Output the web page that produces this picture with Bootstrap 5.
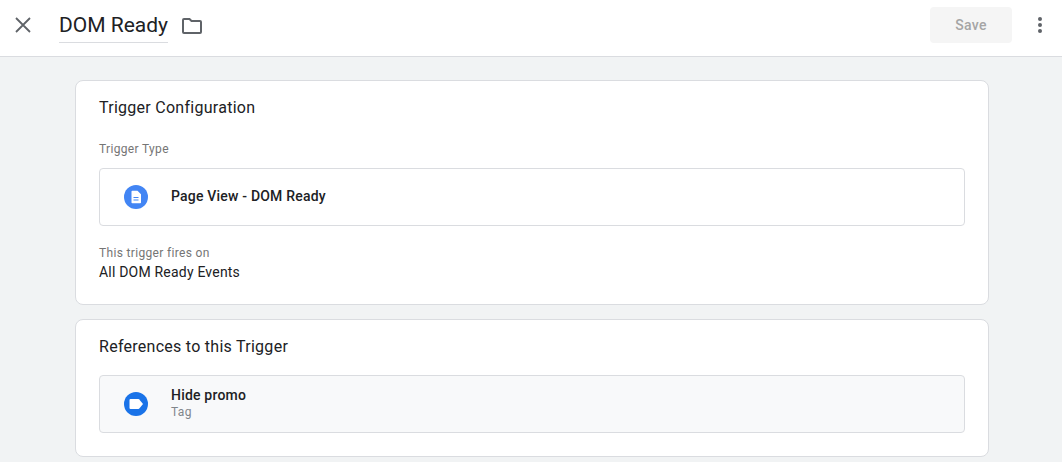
<!DOCTYPE html>
<html lang="en">
<head>
  <meta charset="UTF-8" />
  <title>DOM Ready</title>
  <link rel="stylesheet" href="https://cdn.jsdelivr.net/npm/bootstrap@5.3.0/dist/css/bootstrap.min.css">
  <style>
    body {
      font-family: Roboto, "Liberation Sans", sans-serif;
      background-color: #f1f3f4;
      color: #202124;
      height: 462px;
      overflow: hidden;
    }
    .top-bar {
      height: 57px;
      background: #fff;
      border-bottom: 1px solid #dadce0;
      padding: 0 19px 6px 14px;
    }
    .icon-slot {
      width: 18px;
      height: 18px;
    }
    .trigger-name {
      font-size: 21px;
      line-height: 39px;
      height: 37px;
      margin-left: 27px;
      margin-top: -1px;
      border-bottom: 1px solid #dadce0;
    }
    .folder-icon {
      margin-left: 14px;
      margin-top: 2px;
    }
    .save-btn {
      width: 82px;
      height: 36px;
      background: #f5f5f5;
      color: #a5a5a5;
      border: 0;
      border-radius: 4px;
      font-size: 14px;
      font-weight: 500;
      letter-spacing: .25px;
      margin-right: 25px;
    }
    .kebab {
      margin-top: -1px;
    }
    .page-body {
      width: 914px;
      margin-left: 75px;
      padding-top: 23px;
    }
    .panel {
      background: #fff;
      border: 1px solid #dadce0;
      border-radius: 8px;
      padding: 0 23px;
    }
    .panel-config {
      height: 225px;
      margin-bottom: 14px;
    }
    .panel-refs {
      height: 138px;
    }
    .panel-title {
      font-size: 16px;
      font-weight: 400;
      line-height: 24px;
      letter-spacing: .27px;
      margin: 0;
      padding-top: 15px;
      height: 38px;
    }
    .panel-title-refs {
      margin-bottom: 17px;
    }
    .field-label {
      font-size: 12px;
      line-height: 16px;
      letter-spacing: .33px;
      color: #757575;
    }
    .label-type {
      margin-top: 22px;
      margin-bottom: 11px;
    }
    .label-fires {
      margin-top: 19px;
    }
    .type-row {
      height: 58px;
      border: 1px solid #dadce0;
      border-radius: 4px;
    }
    .type-row-muted {
      background: #f8f9fa;
    }
    .type-icon {
      width: 24px;
      height: 24px;
      margin-left: 24px;
      margin-right: 23px;
    }
    .type-name {
      font-size: 14px;
      font-weight: 500;
      line-height: 18px;
      letter-spacing: .2px;
    }
    .type-name-single {
      margin-top: -2px;
    }
    .type-sub {
      font-size: 12px;
      line-height: 16px;
      letter-spacing: .3px;
      color: #80868b;
    }
    .type-text {
      margin-top: -2px;
    }
    .fires-value {
      font-size: 14px;
      line-height: 20px;
      letter-spacing: .2px;
      margin-top: 1px;
    }
  </style>
</head>
<body>
  <header class="top-bar d-flex align-items-center">
    <svg class="icon-slot" viewBox="0 0 18 18"><path d="M2 2L16 16M16 2L2 16" stroke="#5f6368" stroke-width="1.8" fill="none"/></svg>
    <div class="trigger-name">DOM Ready</div>
    <svg class="folder-icon" width="20" height="18" viewBox="0 0 20 18"><path d="M2 2h5.500l2 2H18a1 1 0 0 1 1 1v10a1 1 0 0 1-1 1H2a1 1 0 0 1-1-1V3a1 1 0 0 1 1-1z" stroke="#5f6368" stroke-width="2" fill="none"/></svg>
    <button class="save-btn ms-auto" type="button" disabled>Save</button>
    <svg class="kebab" width="6" height="18" viewBox="0 0 6 18"><circle cx="3" cy="3" r="2" fill="#5f6368"/><circle cx="3" cy="9" r="2" fill="#5f6368"/><circle cx="3" cy="15" r="2" fill="#5f6368"/></svg>
  </header>

  <main class="page-body">
    <section class="panel panel-config">
      <h2 class="panel-title">Trigger Configuration</h2>
      <div class="field-label label-type">Trigger Type</div>
      <div class="type-row d-flex align-items-center">
        <svg class="type-icon" viewBox="0 0 24 24"><circle cx="12" cy="12" r="12" fill="#4285f4"/><path d="M7.500 6.500a.8.8 0 0 1 .8-.8h5.200l3.500 3.500v8.300a.8.8 0 0 1-.8.8H8.300a.8.8 0 0 1-.8-.8z" fill="#fff"/><path d="M9.500 12.500h5M9.500 15h5" stroke="#4285f4" stroke-width="1.100"/></svg>
        <div class="type-name type-name-single">Page View - DOM Ready</div>
      </div>
      <div class="field-label label-fires">This trigger fires on</div>
      <div class="fires-value">All DOM Ready Events</div>
    </section>
    <section class="panel panel-refs">
      <h2 class="panel-title panel-title-refs">References to this Trigger</h2>
      <div class="type-row type-row-muted d-flex align-items-center">
        <svg class="type-icon" viewBox="0 0 24 24"><circle cx="12" cy="12" r="12" fill="#1a73e8"/><path d="M6.500 7h8l.8.400 3.700 4.600-3.700 4.600-.8.400h-8a1 1 0 0 1-1-1V8a1 1 0 0 1 1-1z" fill="#fff"/></svg>
        <div class="type-text">
          <div class="type-name">Hide promo</div>
          <div class="type-sub">Tag</div>
        </div>
      </div>
    </section>
  </main>
  <script src="https://cdn.jsdelivr.net/npm/bootstrap@5.3.0/dist/js/bootstrap.bundle.min.js"></script>
</body>
</html>
